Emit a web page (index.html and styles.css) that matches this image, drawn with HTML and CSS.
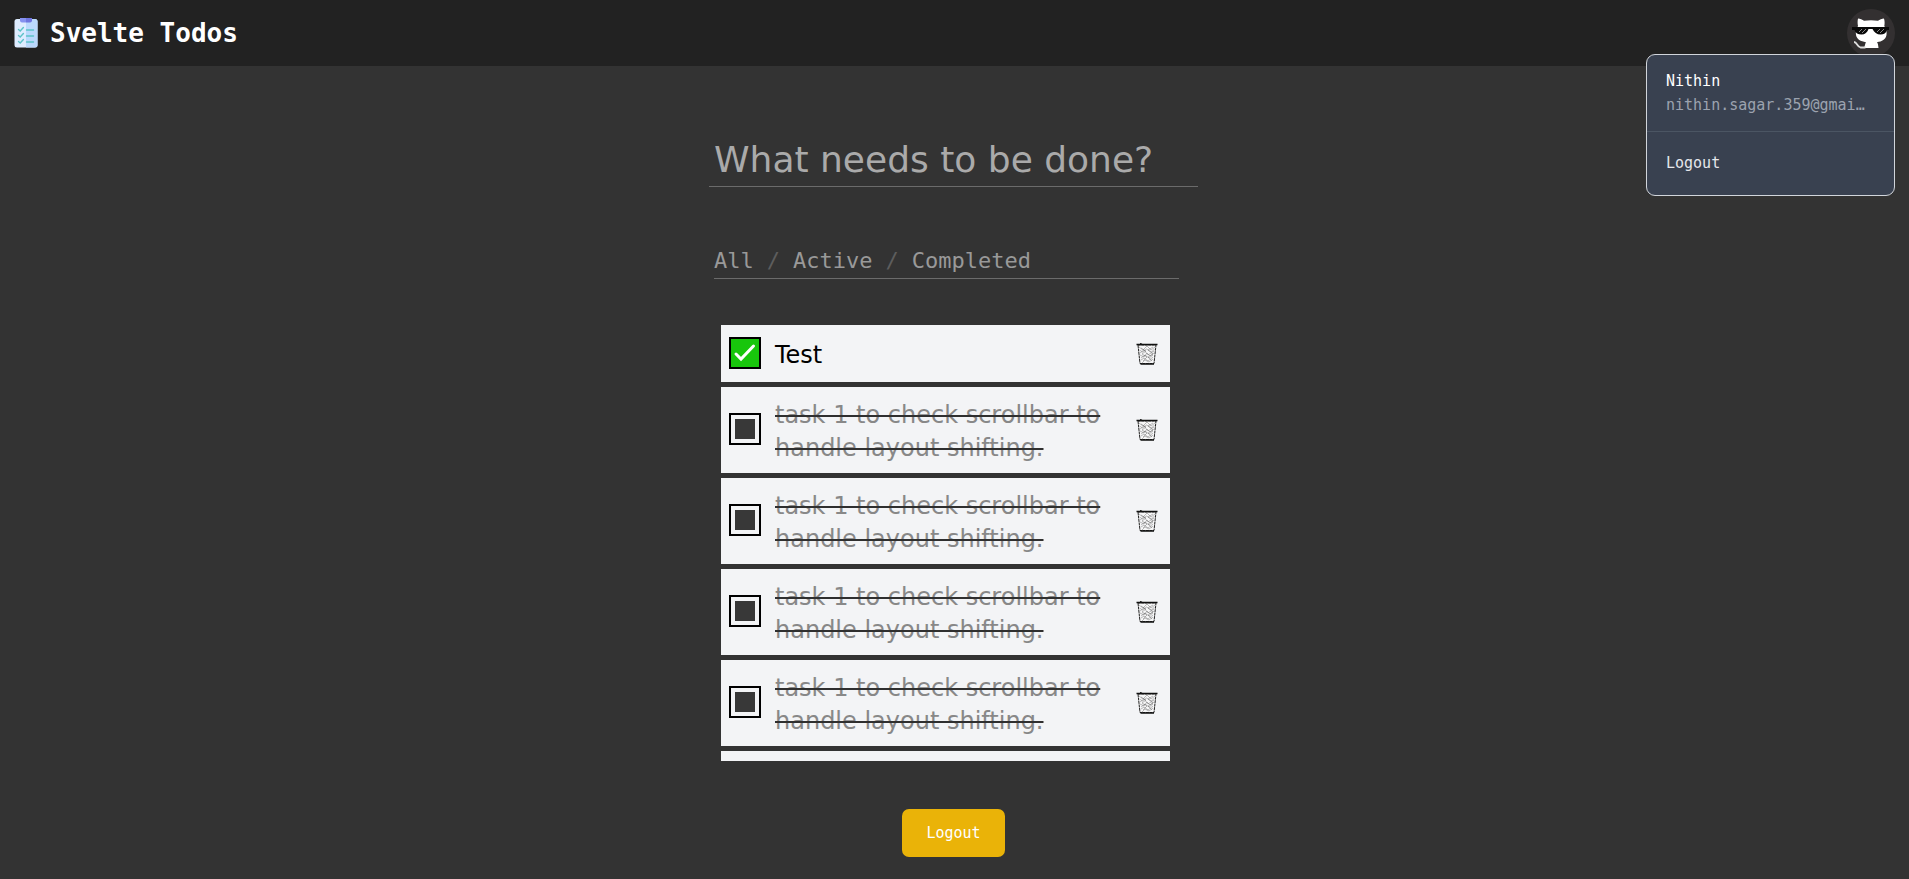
FILE: index.html
```html
<!DOCTYPE html>
<html lang="en">
<head>
<meta charset="utf-8">
<meta name="viewport" content="width=device-width, initial-scale=1">
<title>Svelte Todos</title>
<link rel="stylesheet" href="styles.css">
</head>
<body>
<svg class="defs" aria-hidden="true">
  <symbol id="tick" viewBox="0 0 28 28"><path d="M5 15l5 5L22.500 7" fill="none" stroke="#fff" stroke-width="3" stroke-linecap="round"/></symbol>
  <symbol id="trash" viewBox="0 0 24 24">
    <path d="M3 3L5 21.500h14L21 3z" fill="#f7f7f8" stroke="#222" stroke-width="1" stroke-dasharray="3 .5"/>
    <path d="M1.500 2.500h21M5 1.500l2 .6M5.500 22h13.500" stroke="#111" stroke-width="1.300" fill="none"/>
    <path d="M4 5l4 3 4-4 4 4 4-3M4.500 8l3 2 4-3 5 3 3-3M5 11l4-3 4 5 6-4M5 13l4 2 3-4 3 3 4-3M6 16l4-3 4 3 4-3M6 18l3-2 4 3 5-4M7 21l3-3 4 2 4-3M6 6l5 3-4 3 5 3-4 4M18 5l-5 3 5 4-5 3 4 4" stroke="#444" stroke-width=".6" stroke-opacity=".6" fill="none"/>
  </symbol>
</svg>
<header class="header">
  <h1 class="brand">
    <svg class="brand-icon" viewBox="0 0 24 30" aria-hidden="true">
      <rect x=".5" y="1" width="23" height="28.500" rx="2.500" fill="#deecff"/>
      <path d="M12 1h9a2.500 2.500 0 0 1 2.500 2.500V27a2.500 2.500 0 0 1-2.500 2.500h-9z" fill="#bbd9fd"/>
      <path d="M6 0h6v4.500H8A2 2 0 0 1 6 2.500z" fill="#8591f0"/><path d="M12 0h6v2.500a2 2 0 0 1-2 2h-4z" fill="#6f75df"/>
      <path d="M4.500 11.500l1.700 1.500 3.200-3.500M4.500 17.500l1.700 1.500 3.200-3.500M4.500 23.500l1.700 1.500 3.200-3.500M12.500 12h7M12.500 18h7M12.500 24h7" fill="none" stroke="#5cc3c8" stroke-width="1.400" stroke-linecap="round"/>
    </svg>
    Svelte Todos
  </h1>
  <div class="account">
    <button class="avatar" type="button" aria-label="Account menu" aria-expanded="true">
      <svg viewBox="0 0 48 48" aria-hidden="true">
        <path d="M11 9.500c2 0 4.500 1 6 2.300 4.500-.8 9.500-.8 14 0 1.500-1.300 4-2.300 6-2.300.8 2.500.8 5 .3 7.500 2 3 2.700 6 2.200 9-.8 4.500-4.500 6.500-9.500 7.200 1 1 1.200 3.300 1.500 5.800H17l1-3c.3-1.400.5-2 1-2.800-5.500-.7-9.200-3-10-7.200-.5-3 .2-6 2-9-.5-2.500-.6-5 0-7.500z" fill="#fff"/>
        <path d="M7 33c3 0 3 4.500 6.500 5.500h5" fill="none" stroke="#ddd" stroke-width="1.800"/>
        <path d="M5 18h37v3h-2c-1 3-3 4.500-6.500 4.500S27 23.500 25.500 20h-4c-1 3.500-3.500 5.500-7 5.500S8.500 24 7.500 21H5z" fill="#090909"/>
        <path d="M12 23l3-3M15 24l4-4M30 23l3-3M33 24l4-4" stroke="#aaa" stroke-width=".8"/>
      </svg>
    </button>
    <div class="menu">
      <div class="menu-user">
        <div class="menu-name">Nithin</div>
        <div class="menu-email">nithin.sagar.359@gmai…</div>
      </div>
      <button class="menu-action" type="button">Logout</button>
    </div>
  </div>
</header>
<main class="main">
  <input class="new-todo" type="text" placeholder="What needs to be done?" aria-label="What needs to be done?">
  <nav class="filters">
    <a href="#all">All</a><span>/</span><a href="#active">Active</a><span>/</span><a href="#completed">Completed</a>
  </nav>
  <ul class="todos">
    <li class="todo">
      <span class="check"><input id="t0" type="checkbox" checked><svg aria-hidden="true"><use href="#tick"/></svg></span>
      <label class="todo-text" for="t0">Test</label>
      <button class="delete" type="button" aria-label="Delete"><svg aria-hidden="true"><use href="#trash"/></svg></button>
    </li>
    <li class="todo">
      <span class="check"><input id="t1" type="checkbox"></span>
      <label class="todo-text done" for="t1">task 1 to check scrollbar to handle layout shifting.</label>
      <button class="delete" type="button" aria-label="Delete"><svg aria-hidden="true"><use href="#trash"/></svg></button>
    </li>
    <li class="todo">
      <span class="check"><input id="t2" type="checkbox"></span>
      <label class="todo-text done" for="t2">task 1 to check scrollbar to handle layout shifting.</label>
      <button class="delete" type="button" aria-label="Delete"><svg aria-hidden="true"><use href="#trash"/></svg></button>
    </li>
    <li class="todo">
      <span class="check"><input id="t3" type="checkbox"></span>
      <label class="todo-text done" for="t3">task 1 to check scrollbar to handle layout shifting.</label>
      <button class="delete" type="button" aria-label="Delete"><svg aria-hidden="true"><use href="#trash"/></svg></button>
    </li>
    <li class="todo">
      <span class="check"><input id="t4" type="checkbox"></span>
      <label class="todo-text done" for="t4">task 1 to check scrollbar to handle layout shifting.</label>
      <button class="delete" type="button" aria-label="Delete"><svg aria-hidden="true"><use href="#trash"/></svg></button>
    </li>
    <li class="todo">
      <span class="check"><input id="t5" type="checkbox"></span>
      <label class="todo-text done" for="t5">task 1 to check scrollbar to handle layout shifting.</label>
      <button class="delete" type="button" aria-label="Delete"><svg aria-hidden="true"><use href="#trash"/></svg></button>
    </li>
  </ul>
  <button class="logout" type="button">Logout</button>
</main>
</body>
</html>
```

FILE: styles.css
```css
* { box-sizing: border-box; }

body {
  margin: 0;
  background: #333;
  color: #fff;
  font-family: "DejaVu Sans Mono", monospace;
  font-size: 15px;
  line-height: 24px;
}

button, input { font: inherit; }
button { border: 0; padding: 0; background: none; color: inherit; cursor: pointer; }
svg { display: block; }
.defs { display: none; }

.header {
  display: flex;
  align-items: center;
  justify-content: space-between;
  height: 66px;
  padding: 0 14px;
  background: #222;
}

.brand {
  display: flex;
  align-items: center;
  gap: 12px;
  margin: 0;
  font-size: 26px;
  line-height: 36px;
}

.brand-icon { width: 24px; height: 30px; }

.account { position: relative; }
.avatar {
  display: block;
  width: 48px;
  height: 48px;
  border-radius: 50%;
  background: #333031;
  overflow: hidden;
}
.avatar svg { width: 48px; height: 48px; }

.menu {
  position: absolute;
  top: 45px;
  right: 0;
  width: 249px;
  border: 1px solid #d1d5db;
  border-radius: 9px;
  background: #394150;
}
.menu-user { padding: 14px 19px; border-bottom: 1px solid #4b5563; }
.menu-email {
  overflow: hidden;
  color: #9ca3af;
  text-overflow: ellipsis;
  white-space: nowrap;
}
.menu-action {
  display: block;
  width: 100%;
  padding: 19px 19px 20px;
  color: #e5e7eb;
  text-align: left;
}

.main {
  display: flex;
  flex-direction: column;
  width: 100%;
  max-width: 491px;
  margin: 0 auto;
  padding: 66px 2px 22px 0;
}

.new-todo {
  width: 100%;
  padding: 6px 5px 4px;
  border: 0;
  border-bottom: 1px solid #6b6b6b;
  outline: 0;
  background: none;
  color: #fff;
  font-family: "DejaVu Sans", sans-serif;
  font-size: 36px;
  line-height: 44px;
}
.new-todo::placeholder { color: #aaa; opacity: 1; }

.filters {
  display: flex;
  gap: 13px;
  margin: 57px 19px 0 5px;
  padding-bottom: 1px;
  border-bottom: 1px solid #6b6b6b;
  color: #5d5d5d;
  font-size: 22px;
  line-height: 33px;
}
.filters a { color: #999; text-decoration: none; }

.todos {
  display: flex;
  flex-direction: column;
  gap: 5px;
  height: 436px;
  margin: 46px 28px 48px 12px;
  padding: 0;
  overflow: auto;
  scrollbar-width: none;
  list-style: none;
}

.todo {
  display: flex;
  flex: none;
  align-items: center;
  min-height: 57px;
  padding: 8px 11px 8px 8px;
  background: #f3f4f6;
}

.check { position: relative; flex: none; }
.check input {
  display: block;
  width: 32px;
  height: 32px;
  margin: 0 0 2px;
  padding: 4px;
  border: 2px solid #000;
  appearance: none;
  background: #383838 content-box;
}
.check input:checked { background: #18c60c; }
.check svg {
  position: absolute;
  top: 2px;
  left: 2px;
  width: 28px;
  height: 28px;
  pointer-events: none;
}

.todo-text {
  flex: 1;
  padding: 4px 20px 0 14px;
  color: #000;
  font-family: "DejaVu Sans", sans-serif;
  font-size: 24px;
  line-height: 33px;
}
.done { color: #888; text-decoration: line-through 2px #2f2f2f; }

.delete { flex: none; }
.delete svg { width: 24px; height: 24px; }

.logout {
  align-self: center;
  padding: 12px 24px;
  border-radius: 7px;
  background: #eab308;
}
```
